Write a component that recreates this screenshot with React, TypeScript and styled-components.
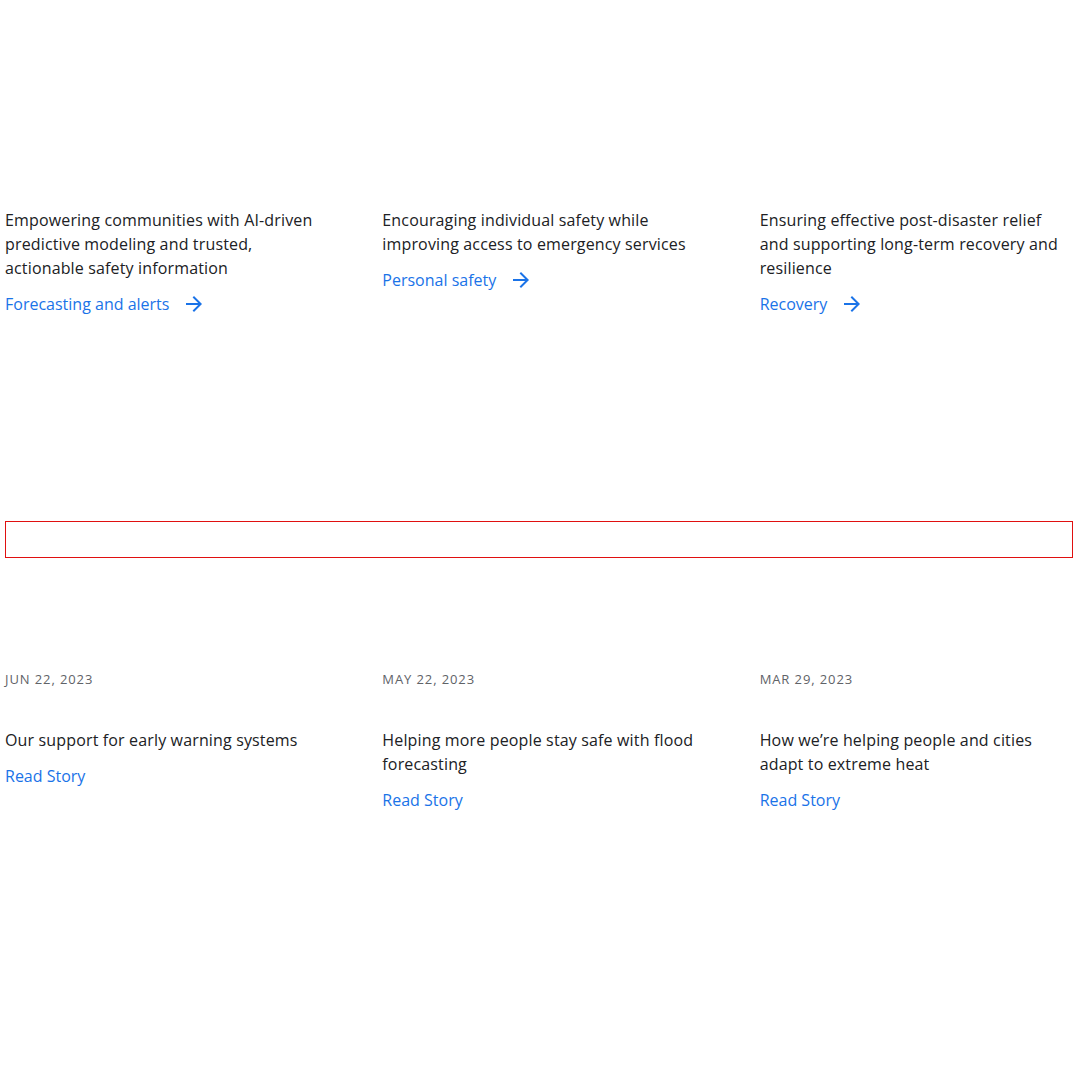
import React from "react";
import styled, { createGlobalStyle } from "styled-components";

const Global = createGlobalStyle`
  html, body { margin: 0; padding: 0; background: #fff; }
  body { font-family: "Open Sans", "Noto Sans", Arial, sans-serif; color: #202124; }
`;

const Page = styled.div`
  padding: 0 5px;
`;

const Grid = styled.div<{ $top: number }>`
  display: grid;
  grid-template-columns: repeat(3, 1fr);
  column-gap: 64px;
  margin-top: ${(p) => p.$top}px;
  align-items: start;
`;

const Card = styled.div`
  display: flex;
  flex-direction: column;
  align-items: flex-start;
`;

const Body = styled.p`
  margin: 0;
  font-size: 16px;
  line-height: 24px;
  letter-spacing: 0.15px;
  color: #202124;
`;

const Link = styled.a`
  display: inline-flex;
  align-items: center;
  margin-top: 12px;
  font-size: 16px;
  line-height: 24px;
  color: #1a73e8;
  text-decoration: none;
`;

const Arrow = styled.svg`
  width: 24px;
  height: 24px;
  margin-left: 13px;
  fill: #1a73e8;
`;

const Box = styled.div`
  margin-top: 205px;
  height: 35px;
  border: 1px solid #e01010;
`;

const DateLabel = styled.div`
  font-size: 13px;
  line-height: 16px;
  font-weight: 500;
  letter-spacing: 0.9px;
  color: #5f6368;
  text-transform: uppercase;
  margin-bottom: 41px;
`;

const features = [
  {
    text: "Empowering communities with AI-driven predictive modeling and trusted, actionable safety information",
    link: "Forecasting and alerts",
  },
  {
    text: "Encouraging individual safety while improving access to emergency services",
    link: "Personal safety",
  },
  {
    text: "Ensuring effective post-disaster relief and supporting long-term recovery and resilience",
    link: "Recovery",
  },
];

const stories = [
  { date: "Jun 22, 2023", title: "Our support for early warning systems" },
  { date: "May 22, 2023", title: "Helping more people stay safe with flood forecasting" },
  { date: "Mar 29, 2023", title: "How we’re helping people and cities adapt to extreme heat" },
];

export default function App() {
  return (
    <Page>
      <Global />
      <Grid $top={208}>
        {features.map((f) => (
          <Card key={f.link}>
            <Body>{f.text}</Body>
            <Link href="#">
              {f.link}
              <Arrow viewBox="0 0 24 24" aria-hidden>
                <path d="M12 4l-1.41 1.41L16.17 11H4v2h12.17l-5.58 5.59L12 20l8-8z" />
              </Arrow>
            </Link>
          </Card>
        ))}
      </Grid>
      <Box />
      <Grid $top={113}>
        {stories.map((s) => (
          <Card key={s.date}>
            <DateLabel>{s.date}</DateLabel>
            <Body>{s.title}</Body>
            <Link href="#">Read Story</Link>
          </Card>
        ))}
      </Grid>
    </Page>
  );
}
